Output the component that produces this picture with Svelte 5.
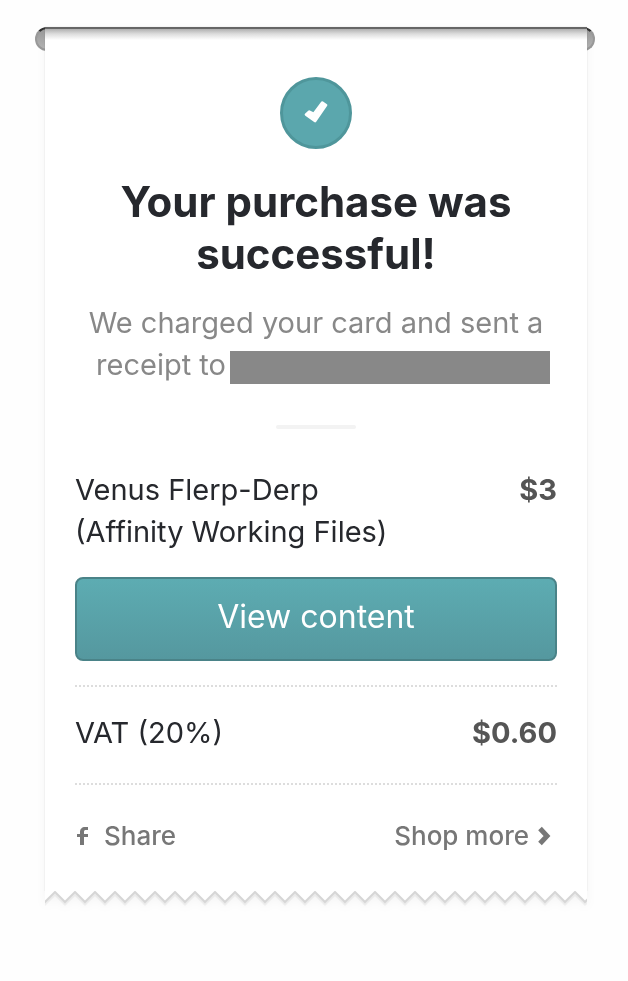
<script>
	const items = [{ name: 'Venus Flerp-Derp (Affinity Working Files)', price: '$3' }];
	const vat = { name: 'VAT (20%)', price: '$0.60' };
</script>

<main class="page">
	<div class="slot">
		<div class="receipt">
			<div class="paper">
				<header>
					<div class="badge">
						<svg viewBox="0 0 24 24" width="24" height="24" aria-hidden="true">
							<path
								d="M2.2 13.5 5.2 10.8 9.8 13.2 18.2 1.8 21.8 4.2 11 19.800Z"
								fill="#fff"
								stroke="#fff"
								stroke-width="3"
								stroke-linejoin="round"
							/>
						</svg>
					</div>
					<h1>Your purchase was successful!</h1>
					<p>
						We charged your card and sent a receipt to<span
							class="email"
							role="img"
							aria-label="Hidden email"
						></span>
					</p>
					<hr />
				</header>

				<section class="items">
					{#each items as item}
						<div class="row">
							<span class="name">{item.name}</span>
							<strong>{item.price}</strong>
						</div>
					{/each}
					<button type="button">View content</button>
				</section>

				<section class="vat row">
					<span class="name">{vat.name}</span>
					<strong>{vat.price}</strong>
				</section>

				<footer>
					<a href="#share">
						<svg viewBox="0 0 14 22" width="14" height="22" aria-hidden="true">
							<path
								d="M5 20V12H2V9H5V7C5 4 7 2 10 2H13V5H11C9.5 5 9 5.5 9 7V9H13V12H9V20Z"
								fill="#777"
							/>
						</svg>
						Share
					</a>
					<a class="more" href="#shop">
						Shop more
						<svg viewBox="0 0 14 20" width="14" height="20" aria-hidden="true">
							<path d="M3 2.5 10 10 3 17.5" fill="none" stroke="#777" stroke-width="5" />
						</svg>
					</a>
				</footer>
			</div>

			<!-- torn edge -->
			<svg class="edge" width="100%" height="16" aria-hidden="true">
				<defs>
					<pattern id="teeth" width="20" height="16" patternUnits="userSpaceOnUse">
						<path d="M0 0V12L10 1 20 12V0Z" fill="#fff" />
						<path d="M-2 11 0 13 10 3 20 13 22 11" fill="none" stroke="#000" stroke-opacity=".05" stroke-width="3" />
						<path d="M-2 9 0 11 10 1 20 11 22 9" fill="none" stroke="#d6d6d6" stroke-width="2" />
					</pattern>
				</defs>
				<rect width="100%" height="16" fill="url(#teeth)" />
			</svg>
		</div>
	</div>
</main>

<style>
	:global(body) {
		background: #fefefe;
	}
	.page {
		box-sizing: border-box;
		max-width: 640px;
		margin: 0 auto;
		padding: 27px 33px 64px 35px;
		font-family: Inter, 'Liberation Sans', sans-serif;
		font-size: 29px;
		line-height: 42px;
		color: #26282d;
	}
	.slot {
		position: relative;
		padding: 0 8px 0 10px;
	}
	.slot::before {
		content: '';
		position: absolute;
		top: 0;
		left: 0;
		right: 0;
		height: 24px;
		box-sizing: border-box;
		border: 2px solid #999;
		border-top-color: #333;
		border-radius: 12px;
		background: linear-gradient(#999, #b5b5b5);
	}
	.receipt {
		position: relative;
		filter: drop-shadow(0 3px 5px rgba(0, 0, 0, 0.04));
	}
	.paper {
		padding: 50px 30px 0;
		background: linear-gradient(#666 0, #666 2px, #b0b0b0 2px, #ddd 7px, #fff 13px);
		box-shadow: 0 0 1px rgba(0, 0, 0, 0.2);
	}
	header {
		text-align: center;
	}
	.badge {
		display: flex;
		align-items: center;
		justify-content: center;
		box-sizing: border-box;
		width: 72px;
		height: 72px;
		margin: 0 auto;
		border: 3px solid #4f969b;
		border-radius: 50%;
		background: #5ba7ad;
	}
	h1 {
		margin: 27px 0 22px;
		font-size: 42px;
		line-height: 52px;
		font-weight: 700;
	}
	p {
		margin: 0;
		color: #888;
	}
	.email {
		display: inline-block;
		width: 320px;
		height: 33px;
		/* the cover runs past the end of the line */
		margin: 0 -14px 0 4px;
		vertical-align: middle;
		background: #888;
	}
	hr {
		width: 80px;
		height: 4px;
		margin: 39px auto 40px;
		border: 0;
		border-radius: 2px;
		background: #f3f3f3;
	}
	.row {
		display: flex;
		justify-content: space-between;
	}
	.name {
		flex: 0 1 70%;
	}
	strong {
		font-weight: 700;
		color: #555;
	}
	button {
		display: block;
		box-sizing: border-box;
		width: 100%;
		height: 84px;
		margin: 24px 0;
		padding: 0 0 4px;
		border: 2px solid #4a8388;
		border-radius: 8px;
		background: linear-gradient(#5dacb2, #55989f);
		color: #fff;
		font: inherit;
		font-size: 32px;
	}
	.vat {
		padding: 25px 0 29px;
		border: 2px dotted #ddd;
		border-width: 2px 0;
	}
	footer {
		display: flex;
		justify-content: space-between;
		padding: 30px 6px 34px 0;
	}
	a {
		display: flex;
		align-items: center;
		gap: 15px;
		font-size: 26px;
		font-weight: 500;
		color: #777;
		text-decoration: none;
	}
	.more {
		gap: 8px;
	}
	.edge {
		display: block;
	}
</style>
